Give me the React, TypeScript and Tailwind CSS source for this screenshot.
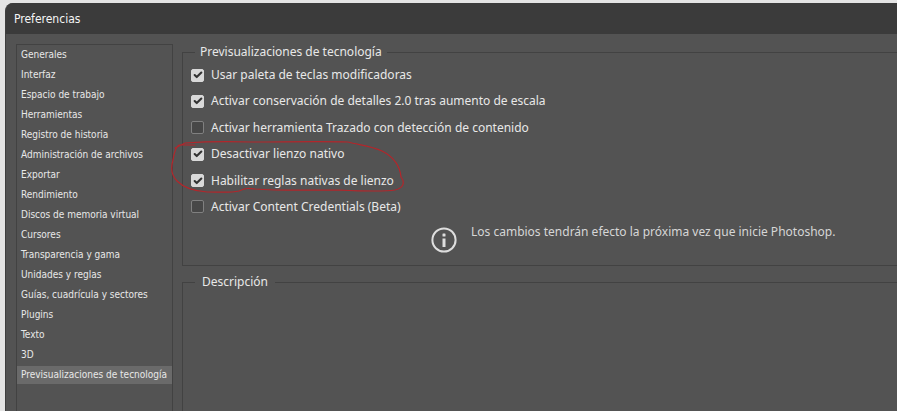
import React, { useState } from 'react';
import { Check } from 'lucide-react';

const CATEGORIES = [
  'Generales',
  'Interfaz',
  'Espacio de trabajo',
  'Herramientas',
  'Registro de historia',
  'Administración de archivos',
  'Exportar',
  'Rendimiento',
  'Discos de memoria virtual',
  'Cursores',
  'Transparencia y gama',
  'Unidades y reglas',
  'Guías, cuadrícula y sectores',
  'Plugins',
  'Texto',
  '3D',
  'Previsualizaciones de tecnología',
];

const OPTIONS = [
  { id: 'modifier-palette', label: 'Usar paleta de teclas modificadoras', checked: true },
  { id: 'preserve-details', label: 'Activar conservación de detalles 2.0 tras aumento de escala', checked: true },
  { id: 'content-aware-tracing', label: 'Activar herramienta Trazado con detección de contenido', checked: false },
  { id: 'native-canvas', label: 'Desactivar lienzo nativo', checked: true },
  { id: 'native-rulers', label: 'Habilitar reglas nativas de lienzo', checked: true },
  { id: 'content-credentials', label: 'Activar Content Credentials (Beta)', checked: false },
];

interface OptionProps {
  id: string;
  label: string;
  defaultChecked: boolean;
}

const Option: React.FC<OptionProps> = ({ id, label, defaultChecked }) => (
  <div className="flex items-center h-5 gap-[7px]">
    <span className="grid place-items-center shrink-0">
      <input
        id={id}
        type="checkbox"
        defaultChecked={defaultChecked}
        className="peer col-start-1 row-start-1 appearance-none w-[13px] h-[13px] rounded-xs border border-[#808080] bg-[#474747] checked:border-[#d9d9d9] checked:bg-[#d9d9d9]"
      />
      <Check size={10} strokeWidth={5} className="col-start-1 row-start-1 pointer-events-none text-[#333333] invisible peer-checked:visible" />
    </span>
    <label htmlFor={id} className="whitespace-nowrap">{label}</label>
  </div>
);

const InfoIcon = () => (
  <svg width="26" height="26" viewBox="0 0 26 26" className="shrink-0" aria-hidden="true">
    <circle cx="13" cy="13" r="11.6" fill="none" stroke="#dedede" strokeWidth="2" />
    <rect x="11.5" y="6.5" width="3" height="3" rx="0.6" fill="#dedede" />
    <rect x="11.5" y="11.5" width="3" height="8.5" fill="#dedede" />
  </svg>
);

// Hand-drawn circle around the native canvas options
const Scribble = () => (
  <svg
    width="240"
    height="60"
    viewBox="0 0 240 60"
    fill="none"
    stroke="#b3262b"
    strokeWidth="1.2"
    strokeLinecap="round"
    className="absolute -top-1 -left-5 pointer-events-none"
    aria-hidden="true"
  >
    <path d="M24 5 L8 5 C4 7 3 14 2 20 C-1 30 1 36 6 41 C13 48 22 51 36 52 C50 52 59 53 68 51 C75 48 77 48 84 49 C110 51 140 50 165 50 C190 51 212 52 224 50 C233 48 234 42 230 37 C229 27 223 17 211 11 C200 6 188 5 177 2 C150 1 110 2 80 2 C50 1 28 2 14 3 L4 8" />
  </svg>
);

export default function App() {
  const [selected, setSelected] = useState('Previsualizaciones de tecnología');

  return (
    <div className="min-h-screen flex pt-[3px] pl-[5px] overflow-hidden bg-[#e4e4e4] font-['Noto_Sans',sans-serif] text-[#e8e8e8]">
      <main className="flex-1 min-w-0 flex flex-col rounded-tl-lg overflow-hidden bg-[#535353] border-l border-[#3f3f3f]">
        <header className="flex items-center h-[31px] px-2 bg-[#3b3b3b]">
          <h1 className="font-['DejaVu_Sans_Condensed','DejaVu_Sans',sans-serif] text-[12px] leading-4 text-[#f5f5f5]">Preferencias</h1>
        </header>

        <div className="flex-1 flex gap-[9px] pl-[10px]">
          <nav className="w-[157px] shrink-0 mt-[10px] border border-b-0 border-[#424242]">
            {CATEGORIES.map((name) => (
              <button
                key={name}
                type="button"
                onClick={() => setSelected(name)}
                className={`block w-full h-5 px-1 border-y border-[#535353] text-left font-['DejaVu_Sans_Condensed','DejaVu_Sans',sans-serif] text-[10px] leading-4 whitespace-nowrap ${selected === name ? 'bg-[#6a6a6a]' : ''}`}
              >
                {name}
              </button>
            ))}
          </nav>

          <div className="flex-1 min-w-0 flex flex-col mt-2 text-[12px] leading-5">
            <fieldset className="min-w-0 h-[224px] border border-r-0 border-[#424242] pl-2">
              <legend className="ml-1 px-[5px]">Previsualizaciones de tecnología</legend>
              <div className="relative flex flex-col justify-between h-[152px] mt-[3px]">
                {OPTIONS.map(({ id, label, checked }) => (
                  <Option key={id} id={id} label={label} defaultChecked={checked} />
                ))}
                <div className="absolute top-[79px] left-0">
                  <Scribble />
                </div>
              </div>
              <div className="flex gap-[14px] ml-[240px] mt-[5px] text-[#d6d6d6]">
                <div className="pt-[5px]">
                  <InfoIcon />
                </div>
                <p className="whitespace-nowrap">Los cambios tendrán efecto la próxima vez que inicie Photoshop.</p>
              </div>
            </fieldset>

            <fieldset className="min-w-0 flex-1 mt-[6px] border border-r-0 border-b-0 border-[#424242] pl-2">
              <legend className="ml-1 px-[7px]">Descripción</legend>
            </fieldset>
          </div>
        </div>
      </main>
    </div>
  );
}
